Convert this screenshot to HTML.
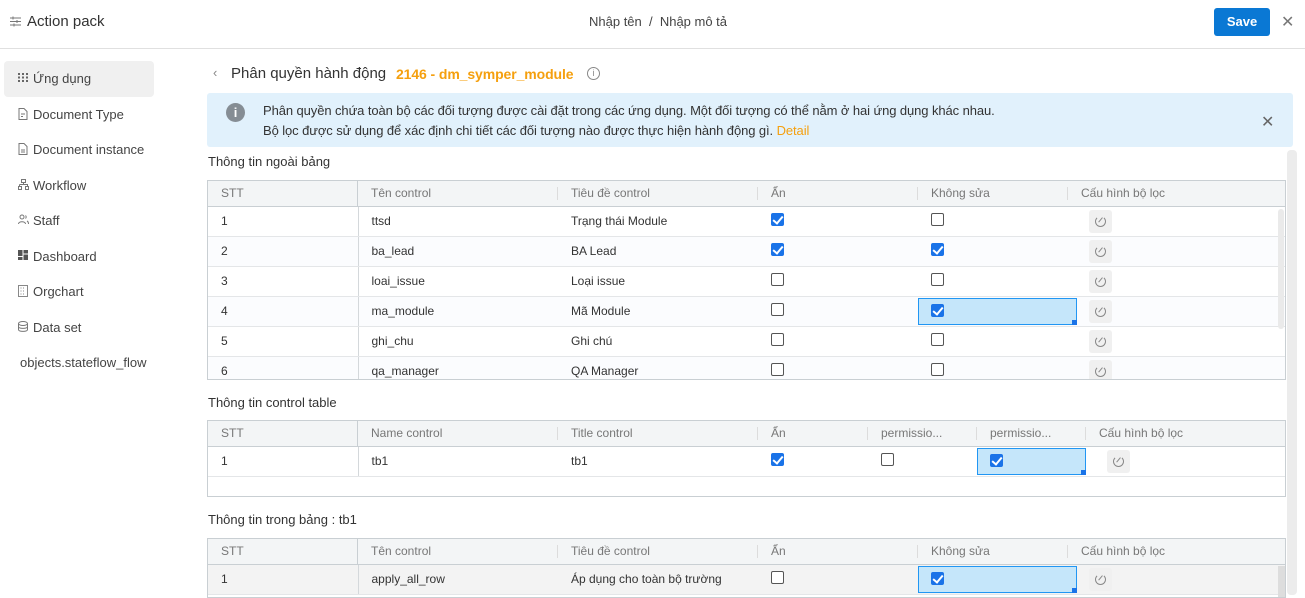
<!DOCTYPE html>
<html><head><meta charset="utf-8"><style>
*{box-sizing:border-box;margin:0;padding:0}
body{width:1305px;height:595px;overflow:hidden;background:#fff;font-family:"Liberation Sans","Noto Sans CJK SC",sans-serif;color:#333;position:relative}
.a{position:absolute;white-space:nowrap}
.side{font-size:13px;color:#444}
.side svg{position:absolute;left:0;top:1px}
.tw{position:absolute;left:207px;width:1079px;border:1px solid #c9cfd3;overflow:hidden;background:#fff}
table{border-collapse:collapse;table-layout:fixed;font-size:12px}
th{height:25px;background:#f3f5f6;color:#777;font-weight:normal;text-align:left;padding-left:13px;border-bottom:1px solid #c9cfd3;position:relative}
th:after{content:"";position:absolute;right:0;top:6px;height:13px;border-right:1px solid #dcdcdc}
th:first-child:after{top:0;height:26px;border-color:#c9cfd3}
td{height:30px;padding-left:13px;border-bottom:1px solid #e4e6e8;color:#333;position:relative}
td:first-child{border-right:1px solid #d4d8db}
.cb{display:inline-block;width:13px;height:13px;border:1px solid #555;border-radius:2px;vertical-align:-1px;margin-top:-8px;background:#fff}
.cb.on{background:#1a73e8;border-color:#1a73e8;position:relative}
.cb.on:after{content:"";position:absolute;left:3px;top:0px;width:4px;height:8px;border:solid #fff;border-width:0 2px 2px 0;transform:rotate(40deg)}
.eb{display:inline-block;width:23px;height:23px;background:#f0f0f0;border-radius:3px;position:relative;margin-left:8px;vertical-align:middle}
.eb:before{content:"";position:absolute;left:6px;top:6px;width:9px;height:9px;border:1.3px solid #888;border-radius:50%;border-top-color:transparent}
.eb:after{content:"";position:absolute;left:11px;top:7px;width:1.3px;height:6px;background:#888;transform:rotate(40deg)}
.sel{position:absolute;left:0;top:1px;right:0;bottom:1px;background:#c5e6fa;border:1px solid #2196f3}
.sel:after{content:"";position:absolute;right:-1px;bottom:-1px;width:5px;height:5px;background:#1a73e8}
.sel .cb{position:absolute;left:12px;top:5px;margin:0}
.h{font-size:13px;color:#333}
</style></head><body>
<!-- header -->
<svg class="a" style="left:10px;top:16px" width="11" height="11" viewBox="0 0 11 11" fill="none" stroke="#777" stroke-width="1"><path d="M0 2h11M0 5.5h11M0 9h11M3 0.5v3M7 4v3M4 7.5v3"/></svg>
<div class="a" style="left:27px;top:13px;font-size:15px;color:#333">Action pack</div>
<div class="a" style="left:589px;top:14px;font-size:13px;color:#444">Nhập tên&nbsp; /&nbsp; Nhập mô tả</div>
<div class="a" style="left:1214px;top:8px;width:56px;height:28px;background:#0a78d4;border-radius:3px;color:#fff;font-weight:bold;font-size:13px;text-align:center;line-height:28px">Save</div>
<div class="a" style="left:1281px;top:12px;font-size:16px;color:#777">✕</div>
<div class="a" style="left:0;top:48px;width:1305px;height:1px;background:#e0e0e0"></div>
<!-- sidebar -->
<div class="a" style="left:4px;top:61px;width:150px;height:36px;background:#f0f0f0;border-radius:4px"></div>
<div class="a side" style="left:18px;top:71px;padding-left:15px"><svg width="10" height="10" viewBox="0 0 10 10" fill="#666"><rect x="0" y="1" width="2" height="2"/><rect x="4" y="1" width="2" height="2"/><rect x="8" y="1" width="2" height="2"/><rect x="0" y="4.5" width="2" height="2"/><rect x="4" y="4.5" width="2" height="2"/><rect x="8" y="4.5" width="2" height="2"/><rect x="0" y="8" width="2" height="2"/><rect x="4" y="8" width="2" height="2"/><rect x="8" y="8" width="2" height="2"/></svg>Ứng dụng</div>
<div class="a side" style="left:18px;top:107px;padding-left:15px"><svg width="10" height="12" viewBox="0 0 10 12" fill="none" stroke="#777"><path d="M1 .5h5l3 3v8H1z M3 6h4M3 8.5h2"/></svg>Document Type</div>
<div class="a side" style="left:18px;top:142px;padding-left:15px"><svg width="10" height="12" viewBox="0 0 10 12" fill="none" stroke="#777"><path d="M1 .5h5l3 3v8H1z M3 7h4M3 9h4"/></svg>Document instance</div>
<div class="a side" style="left:18px;top:178px;padding-left:15px"><svg width="11" height="12" viewBox="0 0 11 12" fill="none" stroke="#777"><path d="M3.5 .5h4v3h-4zM5.5 3.5v2M1.5 5.5h8v2M1.5 5.5v2M.5 7.5h3v3h-3zM7.5 7.5h3v3h-3z"/></svg>Workflow</div>
<div class="a side" style="left:18px;top:213px;padding-left:15px"><svg width="11" height="11" viewBox="0 0 11 11" fill="none" stroke="#777"><circle cx="4" cy="3" r="2"/><path d="M.5 10c0-3 7-3 7 0M7.5 1.5a2 2 0 010 3M9 7c1 .5 1.5 1.5 1.5 3"/></svg>Staff</div>
<div class="a side" style="left:18px;top:249px;padding-left:15px"><svg width="10" height="10" viewBox="0 0 10 10" fill="#555"><rect x="0" y="0" width="4.5" height="6"/><rect x="5.5" y="0" width="4.5" height="3.5"/><rect x="0" y="7" width="4.5" height="3"/><rect x="5.5" y="4.5" width="4.5" height="5.5"/></svg>Dashboard</div>
<div class="a side" style="left:18px;top:284px;padding-left:15px"><svg width="10" height="12" viewBox="0 0 10 12" fill="none" stroke="#888"><rect x=".5" y=".5" width="9" height="11"/><path d="M2.5 3h1M5 3h1M7.5 3h0M2.5 6h1M5 6h1M2.5 9h1M5 9h1" stroke-width="1"/></svg>Orgchart</div>
<div class="a side" style="left:18px;top:320px;padding-left:15px"><svg width="10" height="11" viewBox="0 0 10 11" fill="none" stroke="#777"><ellipse cx="5" cy="2.5" rx="4.5" ry="2"/><path d="M.5 2.5v6c0 2.5 9 2.5 9 0v-6M.5 5.5c0 2.5 9 2.5 9 0"/></svg>Data set</div>
<div class="a side" style="left:20px;top:355px">objects.stateflow_flow</div>
<!-- title -->
<div class="a" style="left:213px;top:65px;font-size:13px;color:#888">‹</div>
<div class="a" style="left:231px;top:65px;font-size:15px;color:#333">Phân quyền hành động</div>
<div class="a" style="left:396px;top:65px;font-size:14px;color:#f5a00f;font-weight:bold;letter-spacing:-0.1px;top:66px">2146 - dm_symper_module</div>
<div class="a" style="left:587px;top:67px;width:13px;height:13px;border:1px solid #888;border-radius:50%;font-size:9px;color:#888;text-align:center;line-height:11px">i</div>
<!-- info -->
<div class="a" style="left:207px;top:93px;width:1086px;height:54px;background:#e1f1fc;border-radius:3px"></div>
<div class="a" style="left:226px;top:103px;width:19px;height:19px;border-radius:50%;background:#858d94;color:#fff;font-weight:bold;font-size:13px;text-align:center;line-height:19px">i</div>
<div class="a" style="left:263px;top:103px;font-size:13px;color:#333;letter-spacing:-0.09px">Phân quyền chứa toàn bộ các đối tượng được cài đặt trong các ứng dụng. Một đối tượng có thể nằm ở hai ứng dụng khác nhau.</div>
<div class="a" style="left:263px;top:123px;font-size:13px;color:#333;letter-spacing:-0.09px">Bộ lọc được sử dụng để xác định chi tiết các đối tượng nào được thực hiện hành động gì. <span style="color:#f5a00f">Detail</span></div>
<div class="a" style="left:1261px;top:112px;font-size:16px;color:#666">✕</div>
<!-- scrollbar -->
<div class="a" style="left:1287px;top:150px;width:10px;height:445px;background:#ececec;border-radius:4px"></div>

<div class="a h" style="left:208px;top:154px">Thông tin ngoài bảng</div>
<div class="tw" style="top:180px;height:200px">
<table style="width:1079px">
<colgroup><col style="width:150px"><col style="width:200px"><col style="width:200px"><col style="width:160px"><col style="width:150px"><col style="width:219px"></colgroup>
<tr><th>STT</th><th>Tên control</th><th>Tiêu đề control</th><th>Ẩn</th><th>Không sửa</th><th>Cấu hình bộ lọc</th></tr>
<tr><td>1</td><td>ttsd</td><td>Trạng thái Module</td><td><span class="cb on"></span></td><td><span class="cb"></span></td><td><span class="eb"></span></td></tr>
<tr style="background:#fbfcfe"><td>2</td><td>ba_lead</td><td>BA Lead</td><td><span class="cb on"></span></td><td><span class="cb on"></span></td><td><span class="eb"></span></td></tr>
<tr><td>3</td><td>loai_issue</td><td>Loại issue</td><td><span class="cb"></span></td><td><span class="cb"></span></td><td><span class="eb"></span></td></tr>
<tr style="background:#fbfcfe"><td>4</td><td>ma_module</td><td>Mã Module</td><td><span class="cb"></span></td><td style="padding:0"><div class="sel" style="right:-9px"><span class="cb on"></span></div></td><td><span class="eb"></span></td></tr>
<tr><td>5</td><td>ghi_chu</td><td>Ghi chú</td><td><span class="cb"></span></td><td><span class="cb"></span></td><td><span class="eb"></span></td></tr>
<tr style="background:#fbfcfe"><td>6</td><td>qa_manager</td><td>QA Manager</td><td><span class="cb"></span></td><td><span class="cb"></span></td><td><span class="eb"></span></td></tr>
</table>
<div class="a" style="left:1070px;top:28px;width:6px;height:120px;background:#eaeaea;border-radius:3px"></div>
</div>

<div class="a h" style="left:208px;top:395px">Thông tin control table</div>
<div class="tw" style="top:420px;height:77px">
<table style="width:1079px">
<colgroup><col style="width:150px"><col style="width:200px"><col style="width:200px"><col style="width:110px"><col style="width:109px"><col style="width:109px"><col style="width:201px"></colgroup>
<tr><th>STT</th><th>Name control</th><th>Title control</th><th>Ẩn</th><th>permissio...</th><th>permissio...</th><th>Cấu hình bộ lọc</th></tr>
<tr><td>1</td><td>tb1</td><td>tb1</td><td><span class="cb on"></span></td><td><span class="cb"></span></td><td style="padding:0"><div class="sel"><span class="cb on"></span></div></td><td><span class="eb"></span></td></tr>
</table>
</div>

<div class="a h" style="left:208px;top:512px">Thông tin trong bảng : tb1</div>
<div class="tw" style="top:538px;height:60px">
<table style="width:1079px">
<colgroup><col style="width:150px"><col style="width:200px"><col style="width:200px"><col style="width:160px"><col style="width:150px"><col style="width:219px"></colgroup>
<tr><th>STT</th><th>Tên control</th><th>Tiêu đề control</th><th>Ẩn</th><th>Không sửa</th><th>Cấu hình bộ lọc</th></tr>
<tr style="background:#f3f3f3"><td>1</td><td>apply_all_row</td><td>Áp dụng cho toàn bộ trường</td><td><span class="cb"></span></td><td style="padding:0"><div class="sel" style="right:-9px"><span class="cb on"></span></div></td><td><span class="eb"></span></td></tr>
</table>
<div class="a" style="left:1070px;top:27px;width:8px;height:40px;background:#ddd"></div>
</div>
</body></html>
